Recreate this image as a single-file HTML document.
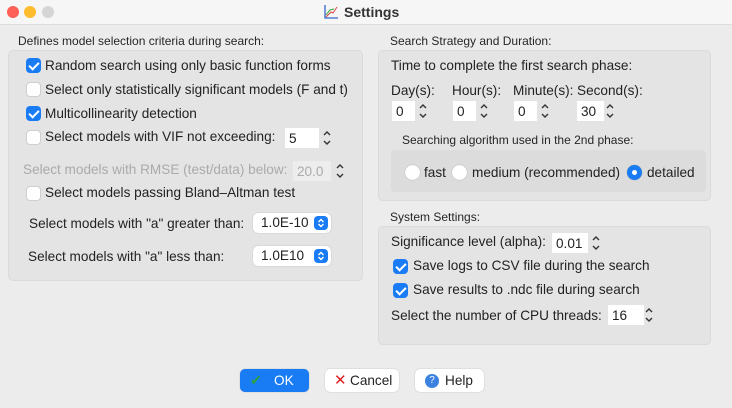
<!DOCTYPE html>
<html><head><style>
*{box-sizing:border-box;margin:0;padding:0}
body{width:732px;height:408px;background:#ececec;font-family:"Liberation Sans",sans-serif;font-size:13.6px;color:#222;position:relative;overflow:hidden}
.a{position:absolute;white-space:nowrap}
.tb{position:absolute;left:0;top:0;width:732px;height:25px;background:#f6f6f6;border-bottom:1px solid #ddd}
.dot{position:absolute;top:6px;width:12px;height:12px;border-radius:50%}
.panel{position:absolute;background:#e4e4e4;border:1px solid #dadada;border-radius:5px}
.lbl{font-size:12px;color:#262626}
.cb{position:absolute;width:15px;height:15px;border-radius:4px;background:#fff;border:1px solid #cfcfcf}
.cb.on{background:#1a7cf5;border-color:#1a7cf5}
.cb.on::after{content:"";position:absolute;left:4px;top:1px;width:4px;height:8px;border:solid #fff;border-width:0 2px 2px 0;transform:rotate(45deg)}
.fld{position:absolute;background:#fff;height:20px;padding:3px 4px;font-size:13.6px}
.sp{position:absolute;width:12px;height:24px}
.sel{position:absolute;background:#fff;border-radius:5px;height:20px;box-shadow:0 0 1px rgba(0,0,0,.3);padding:2px 8px;font-size:13.6px}
.sel svg{position:absolute;right:3px;top:3px}
.rd{position:absolute;width:15px;height:15px;border-radius:50%;background:#fff;box-shadow:0 0 1px rgba(0,0,0,.4)}
.rd.on{background:#1a7cf5}
.rd.on::after{content:"";position:absolute;left:5px;top:5px;width:5px;height:5px;border-radius:50%;background:#fff}
.btn{position:absolute;top:369px;height:23px;border-radius:5px;background:#fff;box-shadow:0 0 1px rgba(0,0,0,.35);font-size:13.6px;line-height:23px}
</style></head><body>
<svg width="0" height="0" style="position:absolute"><defs><symbol id="sp" viewBox="0 0 12 24"><path d="M3 9L6 6L9 9M3 15L6 18L9 15" stroke="#333" stroke-width="1.4" fill="none"/></symbol></defs></svg>
<div class="tb">
<div class="dot" style="left:7px;background:#fe5f57"></div>
<div class="dot" style="left:24px;background:#febc2e"></div>
<div class="dot" style="left:42px;background:#d5d5d5"></div>
<svg class="a" style="left:323px;top:4px" width="16" height="16" viewBox="0 0 16 16"><path d="M2 1V14H15" stroke="#3366cc" fill="none" stroke-width="1.3"/><path d="M3 13L8 8L10 9L14 3" stroke="#d44" fill="none" stroke-width="1"/><path d="M3 11L7 6L11 5" stroke="#3a3" fill="none" stroke-width="1"/></svg>
<div class="a" style="left:344px;top:4px;font-weight:bold;font-size:14px;color:#333">Settings</div>
</div>

<div class="a lbl" style="left:18px;top:34px">Defines model selection criteria during search:</div>
<div class="panel" style="left:8px;top:50px;width:355px;height:231px"></div>
<div class="cb on" style="left:26px;top:58px"></div><div class="a" style="left:45px;top:58px">Random search using only basic function forms</div>
<div class="cb" style="left:26px;top:82px"></div><div class="a" style="left:45px;top:82px">Select only statistically significant models (F and t)</div>
<div class="cb on" style="left:26px;top:106px"></div><div class="a" style="left:45px;top:106px">Multicollinearity detection</div>
<div class="cb" style="left:26px;top:130px"></div><div class="a" style="left:45px;top:129px">Select models with VIF not exceeding:</div>
<div class="fld" style="left:285px;top:128px;width:34px">5</div><svg class="sp" style="left:321px;top:126px"><use href="#sp"/></svg>
<div class="a" style="left:23px;top:162px;color:#aaa">Select models with RMSE (test/data) below:</div>
<div class="fld" style="left:293px;top:161px;width:38px;color:#aaa;background:#ededed">20.0</div><svg class="sp" style="left:334px;top:159px"><use href="#sp"/></svg>
<div class="cb" style="left:26px;top:186px"></div><div class="a" style="left:45px;top:185px">Select models passing Bland–Altman test</div>
<div class="a" style="left:29px;top:216px">Select models with "a" greater than:</div>
<div class="sel" style="left:253px;top:213px;width:78px">1.0E-10<svg width="14" height="14"><rect width="14" height="14" rx="4" fill="#1a7cf5"/><path d="M4.5 6L7 3.5L9.5 6M4.5 8L7 10.5L9.5 8" stroke="#fff" stroke-width="1.4" fill="none"/></svg></div>
<div class="a" style="left:28px;top:249px">Select models with "a" less than:</div>
<div class="sel" style="left:253px;top:246px;width:78px">1.0E10<svg width="14" height="14"><rect width="14" height="14" rx="4" fill="#1a7cf5"/><path d="M4.5 6L7 3.5L9.5 6M4.5 8L7 10.5L9.5 8" stroke="#fff" stroke-width="1.4" fill="none"/></svg></div>

<div class="a lbl" style="left:390px;top:34px">Search Strategy and Duration:</div>
<div class="panel" style="left:378px;top:50px;width:333px;height:151px"></div>
<div class="a" style="left:391px;top:58px">Time to complete the first search phase:</div>
<div class="a" style="left:391px;top:83px">Day(s):</div>
<div class="a" style="left:452px;top:83px">Hour(s):</div>
<div class="a" style="left:513px;top:83px">Minute(s):</div>
<div class="a" style="left:577px;top:83px">Second(s):</div>
<div class="fld" style="left:392px;top:101px;width:23px">0</div><svg class="sp" style="left:417px;top:99px"><use href="#sp"/></svg>
<div class="fld" style="left:453px;top:101px;width:23px">0</div><svg class="sp" style="left:478px;top:99px"><use href="#sp"/></svg>
<div class="fld" style="left:514px;top:101px;width:23px">0</div><svg class="sp" style="left:539px;top:99px"><use href="#sp"/></svg>
<div class="fld" style="left:577px;top:101px;width:27px">30</div><svg class="sp" style="left:604px;top:99px"><use href="#sp"/></svg>
<div class="a lbl" style="left:402px;top:133px">Searching algorithm used in the 2nd phase:</div>
<div class="a" style="left:391px;top:150px;width:315px;height:42px;background:#dcdcdc;border-radius:4px"></div>
<div class="rd" style="left:405px;top:165px"></div><div class="a" style="left:424px;top:165px">fast</div>
<div class="rd" style="left:452px;top:165px"></div><div class="a" style="left:472px;top:165px">medium (recommended)</div>
<div class="rd on" style="left:627px;top:165px"></div><div class="a" style="left:647px;top:165px">detailed</div>

<div class="a lbl" style="left:390px;top:210px">System Settings:</div>
<div class="panel" style="left:378px;top:226px;width:333px;height:119px"></div>
<div class="a" style="left:391px;top:234px">Significance level (alpha):</div>
<div class="fld" style="left:552px;top:233px;width:36px">0.01</div><svg class="sp" style="left:590px;top:231px"><use href="#sp"/></svg>
<div class="cb on" style="left:393px;top:259px"></div><div class="a" style="left:413px;top:258px">Save logs to CSV file during the search</div>
<div class="cb on" style="left:393px;top:283px"></div><div class="a" style="left:413px;top:282px">Save results to .ndc file during search</div>
<div class="a" style="left:391px;top:308px">Select the number of CPU threads:</div>
<div class="fld" style="left:608px;top:305px;width:36px">16</div><svg class="sp" style="left:643px;top:303px"><use href="#sp"/></svg>

<div class="btn" style="left:240px;width:69px;background:#1a7cf5;color:#fff"><span style="position:absolute;left:10px;color:#2ea043;font-size:14px">✔</span><span style="position:absolute;left:34px">OK</span></div>
<div class="btn" style="left:325px;width:74px"><span style="position:absolute;left:9px;color:#e02020;font-size:15px">✕</span><span style="position:absolute;left:25px">Cancel</span></div>
<div class="btn" style="left:415px;width:69px"><span style="position:absolute;left:10px;top:5px;width:14px;height:14px;border-radius:50%;background:#3b82e0;color:#fff;font-size:10px;line-height:14px;text-align:center">?</span><span style="position:absolute;left:30px">Help</span></div>
</body></html>
